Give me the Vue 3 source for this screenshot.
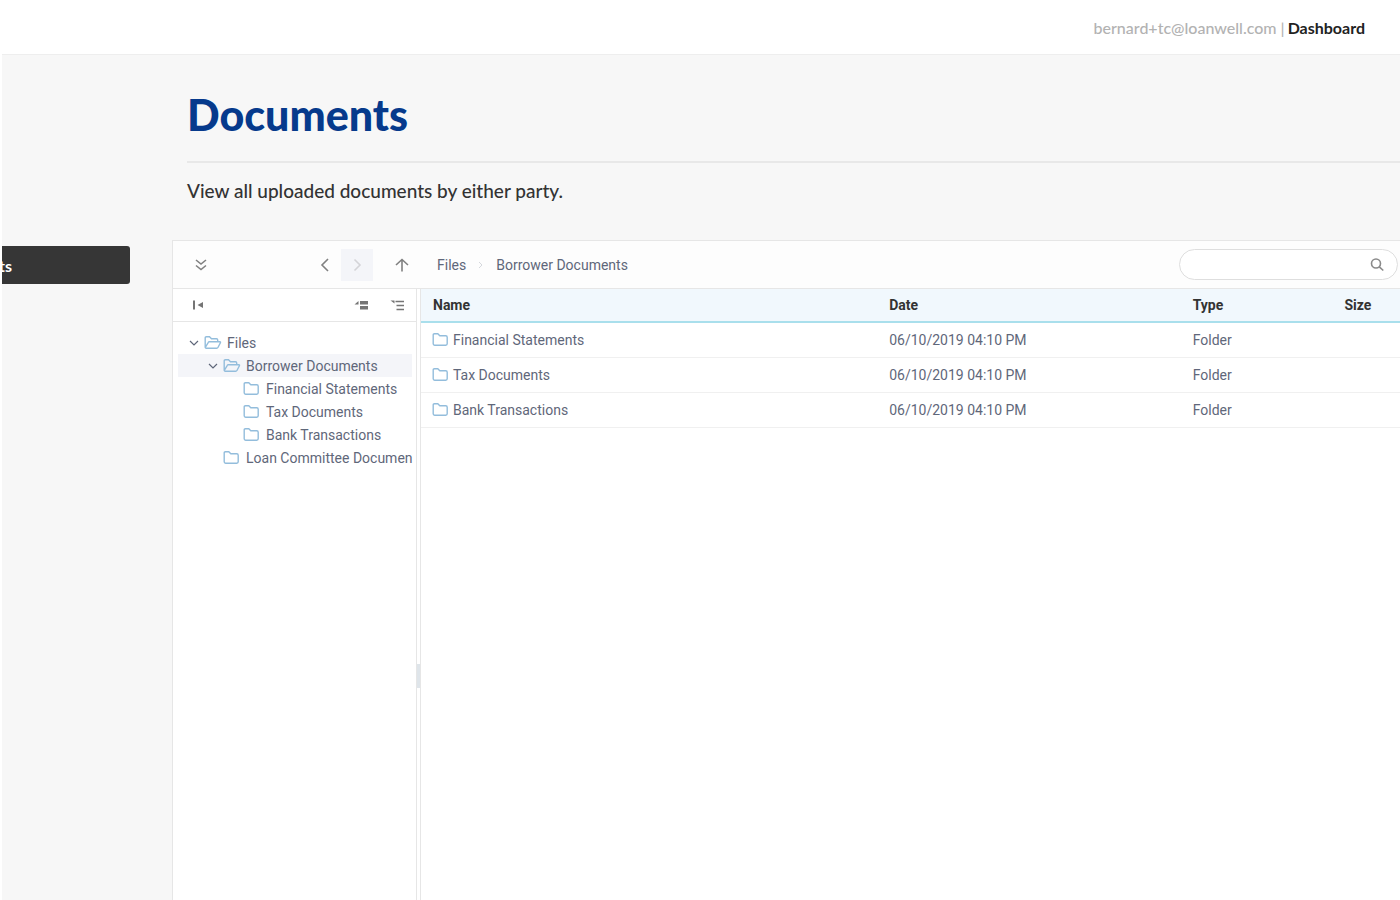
<script setup>
import { ref } from 'vue'

const search = ref('')
const tree = [
  { name: 'Files', level: 0, open: true },
  { name: 'Borrower Documents', level: 1, open: true, selected: true },
  { name: 'Financial Statements', level: 2 },
  { name: 'Tax Documents', level: 2 },
  { name: 'Bank Transactions', level: 2 },
  { name: 'Loan Committee Documen', level: 1 },
]
const files = ['Financial Statements', 'Tax Documents', 'Bank Transactions'].map((name) => ({
  name,
  date: '06/10/2019 04:10 PM',
  type: 'Folder',
}))
</script>

<template>
  <div class="page">
    <header class="topbar">
      <span class="account">bernard+tc@loanwell.com |</span>
      <a class="dash" href="#">Dashboard</a>
    </header>
    <div class="body">
      <nav class="side">
        <button class="side-item" type="button">ts</button>
      </nav>
      <main class="main">
        <div class="intro">
          <h1>Documents</h1>
          <p>View all uploaded documents by either party.</p>
        </div>
        <section class="manager">
          <div class="toolbar">
            <div class="tools">
              <button class="tool" type="button" aria-label="More actions">
                <svg width="16" height="16" viewBox="0 0 16 16"><path d="M3 3l5 4 5-4M3 8.500l5 4 5-4" /></svg>
              </button>
              <span class="spring"></span>
              <button class="tool" type="button" aria-label="Back">
                <svg width="16" height="16" viewBox="0 0 16 16"><path d="M11 2L5 8l6 6" /></svg>
              </button>
              <button class="tool off" type="button" aria-label="Forward" disabled>
                <svg width="16" height="16" viewBox="0 0 16 16"><path d="M5.500 2.500l5.500 5.500-5.500 5.500" /></svg>
              </button>
              <button class="tool up" type="button" aria-label="Up one level">
                <svg width="16" height="16" viewBox="0 0 16 16"><path d="M8 14.500V2.500M2 8L8 2.500 14 8" /></svg>
              </button>
            </div>
            <nav class="crumbs" aria-label="Path">
              <a href="#">Files</a>
              <svg width="6" height="8" viewBox="0 0 6 8"><path d="M1 1l3 3-3 3" /></svg>
              <a href="#">Borrower Documents</a>
            </nav>
            <div class="search">
              <input v-model="search" type="text" aria-label="Search files" />
              <svg width="16" height="16" viewBox="0 0 16 16"><circle cx="7" cy="6.500" r="4.500" /><path d="M10.300 9.800l4 3.700" /></svg>
            </div>
          </div>
          <div class="panes">
            <aside class="tree-pane">
              <div class="tree-head">
                <button class="mini" type="button" aria-label="Hide tree">
                  <svg width="16" height="16" viewBox="0 0 16 16"><path class="fill" d="M3 3.500h2v9H3zM13 5v6L7.500 8z" /></svg>
                </button>
                <span class="spring"></span>
                <button class="mini" type="button" aria-label="Collapse all">
                  <svg width="16" height="16" viewBox="0 0 16 16"><path class="fill" d="M.5 7.500L4.500 4v3.500zM6 4h8v3.500H6zM6 9h8v3.500H6z" /></svg>
                </button>
                <button class="mini" type="button" aria-label="Expand all">
                  <svg width="16" height="16" viewBox="0 0 16 16"><path class="fill" d="M.5 3.500h4v3z" /><path d="M5.500 4.500h8.500M6.500 8.500h7.500M6.500 12.500h7.500" /></svg>
                </button>
              </div>
              <ul class="tree">
                <li v-for="node in tree" :key="node.name">
                  <button type="button" class="node" :class="['level-' + node.level, { selected: node.selected }]">
                    <svg class="arrow" width="10" height="10" viewBox="0 0 10 10"><path v-if="node.open" d="M1 3l4 4 4-4" /></svg>
                    <svg v-if="node.open" class="folder" width="18" height="14" viewBox="0 0 18 14"><path d="M1.200 11V2q0-1.200 1.200-1.200h3.100l2 2h5q1.200 0 1.200 1.200v1.800M1.300 11.500l3-5.200q.3-.6 1-.6h10.400q1.200 0 .7 1l-2.300 4.500q-.5 1-1.500 1H2.200q-1 0-1-1.200" /></svg>
                    <svg v-else class="folder" width="18" height="14" viewBox="0 0 18 14"><path d="M2.400.800h3.400l2 2h6q1.400 0 1.400 1.400v6.600q0 1.400-1.400 1.400H2.600q-1.400 0-1.400-1.400V2q0-1.200 1.200-1.200z" /></svg>
                    <span>{{ node.name }}</span>
                  </button>
                </li>
              </ul>
            </aside>
            <div class="splitter"><i></i></div>
            <div class="list">
              <table>
                <thead>
                  <tr>
                    <th class="c-name" scope="col">Name</th>
                    <th class="c-date" scope="col">Date</th>
                    <th class="c-type" scope="col">Type</th>
                    <th scope="col">Size</th>
                  </tr>
                </thead>
                <tbody>
                  <tr v-for="file in files" :key="file.name">
                    <td>
                      <div class="file">
                        <svg class="folder" width="18" height="14" viewBox="0 0 18 14"><path d="M2.400.800h3.400l2 2h6q1.400 0 1.400 1.400v6.600q0 1.400-1.400 1.400H2.600q-1.400 0-1.400-1.400V2q0-1.200 1.200-1.200z" /></svg>
                        <span>{{ file.name }}</span>
                      </div>
                    </td>
                    <td>{{ file.date }}</td>
                    <td>{{ file.type }}</td>
                    <td></td>
                  </tr>
                </tbody>
              </table>
            </div>
          </div>
        </section>
      </main>
    </div>
  </div>
</template>

<style>
body {
  background: #fff;
}
</style>

<style scoped>
* {
  box-sizing: border-box;
}
.page {
  display: flex;
  flex-direction: column;
  min-height: 100vh;
  padding-left: 2px;
  overflow: hidden;
  font-family: Roboto, "Liberation Sans", sans-serif;
  font-size: 14px;
  color: #5f677a;
}
button {
  border: 0;
  padding: 0;
  background: none;
  font: inherit;
  color: inherit;
}
a {
  color: inherit;
  text-decoration: none;
}
svg {
  display: block;
  flex: none;
  fill: none;
  stroke: currentColor;
  stroke-width: 1.6;
}
.fill {
  fill: currentColor;
  stroke: none;
}
.spring {
  flex: 1;
}
.topbar {
  display: flex;
  justify-content: flex-end;
  align-items: center;
  gap: 3px;
  height: 54px;
  padding-right: 35px;
  font-family: Lato, sans-serif;
  font-size: 16px;
  font-weight: 500;
  color: #b2b2b2;
}
.dash {
  font-weight: 700;
  color: #222;
}
.body {
  flex: 1;
  display: flex;
  background: #f7f7f7;
  border-top: 1px solid #eee;
}
.side {
  flex: none;
  width: 170px;
  padding-top: 191px;
}
.side-item {
  display: block;
  width: 128px;
  height: 38px;
  overflow: hidden;
  border-radius: 0 3px 3px 0;
  background: #363636;
  color: #fff;
  font-family: Lato, sans-serif;
  font-size: 16px;
  font-weight: 700;
  text-align: left;
  text-indent: -3px;
}
.main {
  flex: 1;
  min-width: 0;
  display: flex;
  flex-direction: column;
}
.intro {
  height: 185px;
  padding-left: 15px;
}
h1 {
  margin: 0;
  height: 108px;
  padding-top: 32px;
  border-bottom: 2px solid #e8e8e8;
  font-family: Lato, sans-serif;
  font-size: 43px;
  line-height: 56px;
  font-weight: 900;
  color: #063a8c;
}
p {
  margin: 0;
  padding-top: 16px;
  font-family: Lato, sans-serif;
  font-size: 19px;
  line-height: 24px;
  font-weight: 500;
  color: #333;
}
.manager {
  flex: 1;
  display: flex;
  flex-direction: column;
  border: solid #e6e6e6;
  border-width: 1px 0 0 1px;
  background: #fff;
}
.toolbar {
  display: flex;
  align-items: center;
  height: 48px;
  padding-right: 2px;
  background: #fdfdfd;
  border-bottom: 1px solid #e6e6e6;
}
.tools {
  display: flex;
  align-items: center;
  width: 248px;
  padding: 0 3px 0 12px;
}
.tool {
  display: grid;
  place-items: center;
  width: 32px;
  height: 32px;
  color: #808080;
}
.up {
  margin-left: 13px;
}
.off {
  background: #f4f5f9;
  color: #d4d4d8;
}
.crumbs {
  flex: 1;
  display: flex;
  align-items: center;
  gap: 12px;
  padding-left: 16px;
}
.crumbs svg {
  color: #d5d8dd;
  stroke-width: 1;
}
.search {
  position: relative;
  width: 219px;
  color: #8a8a8a;
}
.search input {
  display: block;
  width: 100%;
  height: 31px;
  padding: 0 36px 0 14px;
  border: 1px solid #dedede;
  border-radius: 16px;
  background: #fff;
  font: inherit;
  outline: 0;
}
.search svg {
  position: absolute;
  top: 8px;
  right: 13px;
}
.panes {
  flex: 1;
  display: flex;
}
.tree-pane {
  flex: none;
  width: 243px;
}
.tree-head {
  display: flex;
  align-items: center;
  gap: 20px;
  height: 33px;
  padding: 0 10px 0 17px;
  border-bottom: 1px solid #e6e6e6;
  color: #757575;
}
.tree {
  margin: 0;
  padding: 9px 4px 0 5px;
  list-style: none;
}
.node {
  display: flex;
  align-items: center;
  width: 100%;
  height: 23px;
  white-space: nowrap;
}
.node span {
  padding-left: 5px;
}
.arrow {
  margin-right: 5px;
  stroke-width: 1.2;
}
.level-0 {
  padding-left: 11px;
}
.level-1 {
  padding-left: 30px;
}
.level-2 {
  padding-left: 50px;
}
.selected {
  background: #f4f5f9;
}
.folder {
  color: #93bddc;
  stroke-width: 1.4;
}
.splitter {
  flex: none;
  display: flex;
  align-items: center;
  width: 5px;
  padding-top: 163px;
  border: solid #e6e6e6;
  border-width: 0 1px;
}
.splitter i {
  width: 3px;
  height: 24px;
  background: #dfe5ea;
}
.list {
  flex: 1;
  min-width: 0;
}
table {
  width: 100%;
  table-layout: fixed;
  border-collapse: separate;
  border-spacing: 0;
  white-space: nowrap;
}
td {
  height: 35px;
  padding: 0 0 0 12px;
  border-bottom: 1px solid #f0f0f0;
  text-align: left;
}
th {
  height: 34px;
  padding: 0 0 0 12px;
  background: #f1f8fd;
  border-bottom: 2px solid #a9dfec;
  text-align: left;
  font-weight: 700;
  color: #333;
}
.c-name {
  width: 46.6%;
}
.c-date {
  width: 31%;
}
.c-type {
  width: 15.5%;
}
.file {
  display: flex;
  align-items: center;
  gap: 3px;
  margin-left: -1px;
}
</style>
